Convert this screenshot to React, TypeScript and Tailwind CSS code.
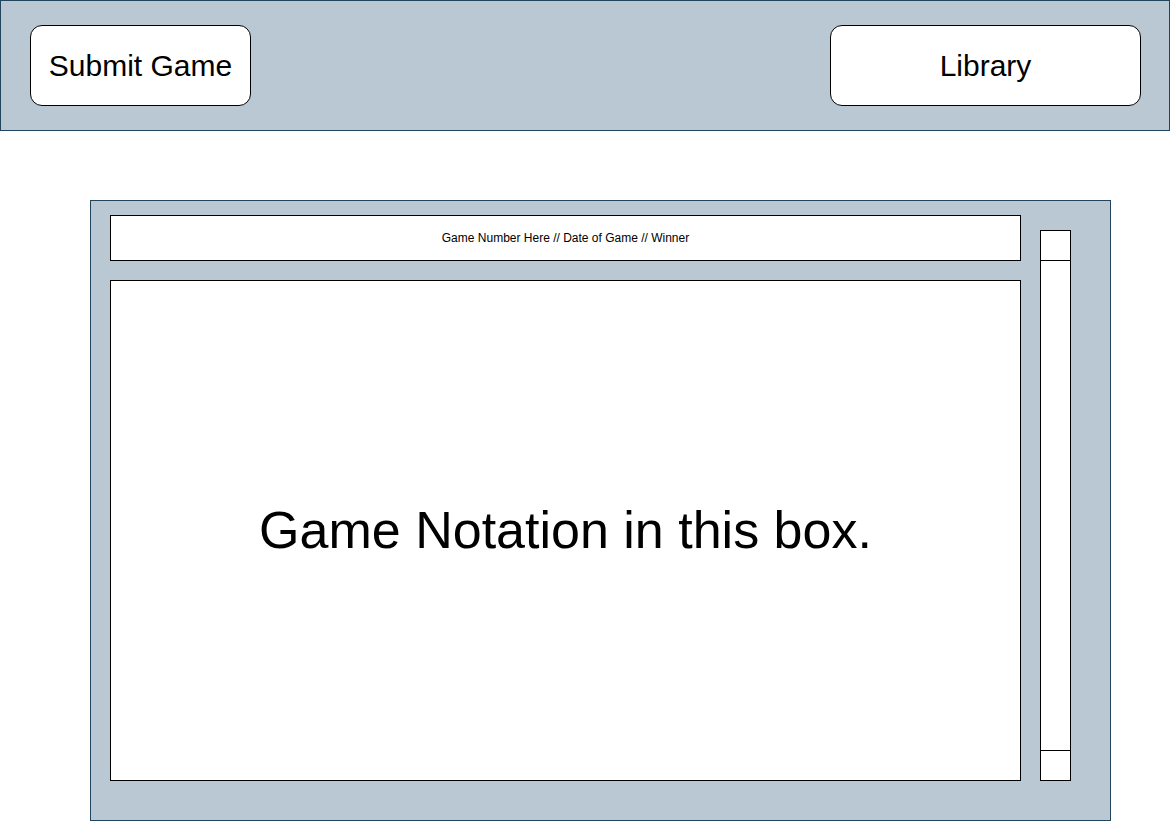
const navButton =
  'h-[81px] rounded-xl border border-black bg-white text-[30px] leading-9 text-black cursor-pointer';

function TopBar() {
  return (
    <header className="border border-[#23445d] bg-[#bac8d3]">
      <nav className="flex items-center justify-between py-6 pr-[28px] pl-[29px]">
        <button type="button" className={`${navButton} w-[221px]`}>
          Submit Game
        </button>
        <button type="button" className={`${navButton} w-[311px]`}>
          Library
        </button>
      </nav>
    </header>
  );
}

function Scrollbar() {
  return (
    <div className="mt-[15px] flex w-[31px] flex-col border border-black bg-white">
      <button type="button" aria-label="Scroll up" className="h-[30px] border-b border-black" />
      <div className="flex-1" />
      <button type="button" aria-label="Scroll down" className="h-[30px] border-t border-black" />
    </div>
  );
}

export default function App() {
  return (
    <div className="bg-white font-['Liberation_Sans',Arial,Helvetica,sans-serif] text-black">
      <TopBar />
      <main className="mt-[69px] mr-[59px] ml-[90px] flex gap-[19px] border border-[#23445d] bg-[#bac8d3] pt-[14px] pr-[39px] pb-[39px] pl-[19px]">
        <div className="flex flex-1 flex-col gap-[19px]">
          <h1 className="flex h-[46px] items-center justify-center border border-black bg-white text-xs">
            Game Number Here // Date of Game // Winner
          </h1>
          <section className="flex min-h-[501px] items-center justify-center border border-black bg-white">
            <p className="text-center text-[52px] leading-[61px]">Game Notation in this box.</p>
          </section>
        </div>
        <Scrollbar />
      </main>
    </div>
  );
}
